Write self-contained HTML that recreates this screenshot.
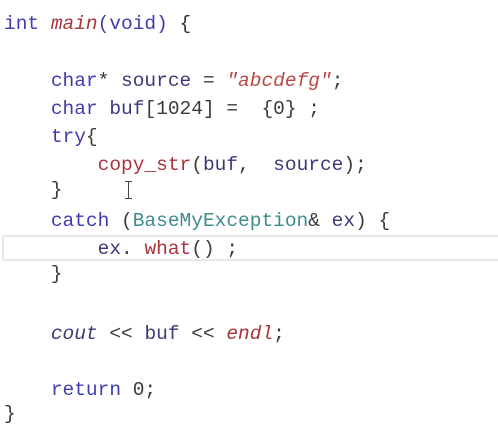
<!DOCTYPE html>
<html><head><meta charset="utf-8"><style>
html,body{margin:0;padding:0;background:#fff;width:498px;height:434px;overflow:hidden;}
.l{position:absolute;left:4px;height:28px;line-height:28px;white-space:pre;font-family:"Liberation Mono","DejaVu Sans Mono",monospace;font-size:19.5px;color:#3a3a3a;}
.k{color:#3d3db0;}
.v{color:#3a3a78;}
.f{color:#a8343c;}
.i{font-style:italic;}
.s{color:#b84848;font-style:italic;}
.t{color:#3f8c8c;}
.p{color:#333;}
.hl{position:absolute;left:2px;right:-5px;top:235px;height:26px;border:2px solid #e8e8e8;border-right:none;box-sizing:border-box;}
.cur{position:absolute;left:125px;top:181px;width:6px;height:18px;}
.cur:before{content:"";position:absolute;left:2.5px;top:0;width:1.5px;height:18px;background:#444;}
.cur:after{content:"";position:absolute;left:0;top:0;width:7px;height:18px;border-top:1.5px solid #444;border-bottom:1.5px solid #444;box-sizing:border-box;}
</style></head><body>
<div class="hl"></div>
<div class="l" style="top:10px"><span class="k">int</span> <span class="f i">main</span><span class="k">(void)</span> <span class="p">{</span></div>
<div class="l" style="top:67px">    <span class="k">char</span><span class="p">*</span> <span class="v">source</span> = <span class="s">"abcdefg"</span>;</div>
<div class="l" style="top:95px">    <span class="k">char</span> <span class="v">buf</span>[1024] =  {0} ;</div>
<div class="l" style="top:123px">    <span class="k">try</span>{</div>
<div class="l" style="top:151px">        <span class="f">copy_str</span>(<span class="v">buf</span>,  <span class="v">source</span>);</div>
<div class="l" style="top:176px">    }</div>
<div class="cur"></div>
<div class="l" style="top:207px">    <span class="k">catch</span> (<span class="t">BaseMyException</span>&amp; <span class="v">ex</span>) {</div>
<div class="l" style="top:235px">        <span class="v">ex</span>. <span class="f">what</span>() ;</div>
<div class="l" style="top:260px">    }</div>
<div class="l" style="top:320px">    <span class="v i">cout</span> &lt;&lt; <span class="v">buf</span> &lt;&lt; <span class="f i">endl</span>;</div>
<div class="l" style="top:376px">    <span class="k">return</span> 0;</div>
<div class="l" style="top:400px">}</div>
</body></html>
